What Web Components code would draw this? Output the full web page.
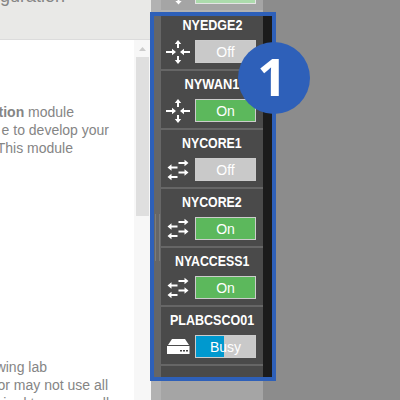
<!DOCTYPE html>
<html lang="en"><head><meta charset="utf-8"><title>Lab devices</title>
<style>
html,body{margin:0;width:400px;height:400px;overflow:hidden;background:#8c8c8c}
body{font-family:"Liberation Sans",Arial,sans-serif}
</style></head><body><lab-screen></lab-screen>
<script>
const make=(name,html,setup)=>customElements.define(name,class extends HTMLElement{
  connectedCallback(){
    if(this.shadowRoot)return;
    const t=document.createElement('template');t.innerHTML=html;
    this.attachShadow({mode:'open'}).append(t.content.cloneNode(true));
    if(setup)setup(this,this.shadowRoot);
  }
});
const icons={
router:`<g fill="#fff"><path d="M12 0l3.200 4H13v4h-2V4H8.800z"/><path d="M12 24l3.200-4H13v-4h-2v4H8.800z"/><path d="M10 12L6 8.800V11H0v2h6v2.200z"/><path d="M14 12l4-3.200V11h6v2h-6v2.200z"/></g>`,
switch:`<g fill="#fff"><path d="M22.500 5L18.500 1.800V4h-6v2h6v2.200z"/><path d="M1.500 9.500l4-3.200v2.200h6v2h-6v2.200z"/><path d="M22.500 14.500l-4-3.200v2.200h-6v2h6v2.200z"/><path d="M1.500 19l4-3.200V18h6v2h-6v2.200z"/></g>`,
server:`<path fill="#fff" d="M6 4h13l4 6h-21zM1 11h22.500v8H1z"/><path fill="#444" d="M14 15h2v1.500h-2zM17 15h2v1.500h-2zM20 15h2v1.500h-2z"/>`};

make('device-icon','<style>:host{display:block;width:24px;height:24px}svg{display:block}</style>',(h,r)=>{
  const t=document.createElement('template');
  t.innerHTML=`<svg width="24" height="24" viewBox="0 0 24 24">${icons[h.getAttribute('kind')]}</svg>`;
  r.append(t.content);
});
make('power-state',`<style>
:host{display:block;box-sizing:border-box;width:61px;height:23px;border:1px solid #ccc;background:#c9c9c9;color:#fff;font-size:14px;line-height:22px;text-align:center}
:host([state=on]){background:#5cb85c}
:host([state=busy]){background:linear-gradient(90deg,#0099cf 28px,#c9c9c9 28px)}
</style><slot></slot>`);
make('lab-device',`<style>
:host{display:block;box-sizing:border-box;height:59px;background:#4a4a4a;border-bottom:2px solid #666}
.name{height:28px;line-height:27px;display:flex;justify-content:center;color:#fff;font-weight:bold;font-size:14px;white-space:nowrap}
.name span{flex:none;transform:scaleX(var(--sx,1))}
.row{display:flex;align-items:center;gap:5px;padding-left:5px;height:23px}
</style><div class="name"><span></span></div><div class="row"><power-state></power-state></div>`,(h,r)=>{
  const s=r.querySelector('span');s.textContent=h.getAttribute('name');
  s.style.setProperty('--sx',+h.getAttribute('width')/s.offsetWidth);
  const icon=document.createElement('device-icon');
  icon.setAttribute('kind',h.getAttribute('kind'));
  r.querySelector('.row').prepend(icon);
  const p=r.querySelector('power-state');p.setAttribute('state',h.getAttribute('state').toLowerCase());
  p.textContent=h.getAttribute('state');
});
make('device-panel',`<style>
:host{display:block;position:relative;width:125px;height:400px;background:linear-gradient(90deg,#b2b2b2 10px,#a5a5a5 10px 112px,#8c8c8c 112px)}
.previous{display:flex;flex-direction:column;align-items:flex-end;height:12px;width:112px;box-sizing:border-box}
.bar{box-sizing:border-box;width:61px;height:4px;margin-right:7px;background:#acdbac;border:1px solid #e4e4e4;border-top:0}
.up{position:absolute;left:22px;top:0}
.line{width:102px;height:2px;margin-top:6px;background:#b2b2b2}
.frame{margin-left:-1px;width:126px;height:369px;box-sizing:border-box;border:4px solid #2e60b9;background:#1b1b1b;display:flex;overflow:hidden}
.split{width:7px;background:#666;display:flex;flex-direction:column;justify-content:center;align-items:center}
.grip{width:3px;height:47px;margin-top:81px;border:solid #7b7b7b;border-width:0 1px}
.list{width:102px;background:#4a4a4a}
.shift{margin-top:-4px}
</style><div class="previous"><div class="bar"></div><div class="line"></div></div>
<svg class="up" width="12" height="5"><path d="M4.500 0h2v1h2.200L5.500 4.500 2.300 1h2.200z" fill="#fff"/></svg>
<div class="frame"><div class="split"><div class="grip"></div></div><div class="list"><div class="shift"><slot></slot></div></div></div>`);
make('lab-guide',`<style>
:host{display:block;width:151px;height:400px;background:#fff;color:#858585;font-size:14px;line-height:18px;overflow:hidden}
header{height:39px;background:#e9e9e7;border-bottom:1px solid #dcdcdc;font-size:18px;line-height:20px}
header div{display:flex;justify-content:flex-end;width:65px;height:20px;white-space:nowrap}
header span{flex:none;transform:translateY(-14px)}
.body{display:flex;height:360px}
.copy{width:134px;overflow:hidden;white-space:nowrap}
.l{display:flex;justify-content:flex-end;height:18px}
.l span{flex:none}
.scroll{width:17px;background:#f7f7f7}
.scroll svg{display:block;margin:7px 0 0 5px}
.thumb{width:13px;height:159px;margin:6px 0 0 2px;background:#dfdfdf}
</style><header><div><span>guration</span></div></header><div class="body"><div class="copy">
<div class="l" style="width:74px;margin-top:63px"><span><b>tion</b> module</span></div>
<div class="l" style="width:109px"><span>e to develop your</span></div>
<div class="l" style="width:73px"><span>This module</span></div>
<div class="l" style="width:47px;margin-top:201px"><span>wing lab</span></div>
<div class="l" style="width:108px"><span>or may not use all</span></div>
<div class="l" style="width:109px"><span>ired to answer all</span></div>
</div><div class="scroll"><svg width="7" height="4"><path d="M3.500 0L7 4H0z" fill="#ccc"/></svg><div class="thumb"></div></div></div>`);
make('step-badge',`<style>:host{position:absolute;left:238px;top:42px;width:72px;height:72px;border-radius:50%;background:#2e60b9;color:#fff;font:bold 52px/72px "Open Sans",sans-serif;text-align:center}span{position:relative;left:-2px;top:-2px}</style><span><slot></slot></span>`);
make('lab-screen',`<style>:host{display:flex;position:relative;width:400px;height:400px;overflow:hidden;background:#8c8c8c}</style>
<lab-guide></lab-guide><device-panel>
<lab-device name="NYEDGE2" width="60" kind="router" state="Off"></lab-device>
<lab-device name="NYWAN1" width="55" kind="router" state="On"></lab-device>
<lab-device name="NYCORE1" width="60" kind="switch" state="Off"></lab-device>
<lab-device name="NYCORE2" width="60" kind="switch" state="On"></lab-device>
<lab-device name="NYACCESS1" width="74" kind="switch" state="On"></lab-device>
<lab-device name="PLABCSCO01" width="84" kind="server" state="Busy"></lab-device>
</device-panel><step-badge>1</step-badge>`);
</script></body></html>
